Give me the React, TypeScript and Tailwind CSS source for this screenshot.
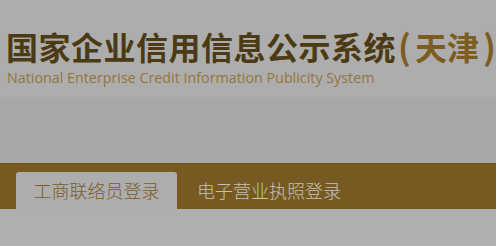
export default function App() {
  return (
    <div className="w-[496px] h-[246px] bg-[#afafaf] overflow-hidden" style={{ fontFamily: '"Noto Sans CJK SC", sans-serif' }}>
      <div className="h-[97px] bg-[#adadad] pl-[6px] pt-[26px]">
        <div className="flex items-center h-[40px] text-[32px] leading-none font-bold whitespace-nowrap">
          <span className="text-[#4b3a13] tracking-[0.5px]">国家企业信用信息公示系统</span>
          <span className="text-[#7d5c22] ml-[2px] text-[34px] font-semibold">(</span>
          <span className="text-[#7d5c22] mx-[4px]">天津</span>
          <span className="text-[#7d5c22] text-[34px] font-semibold">)</span>
        </div>
        <div className="mt-[3px] pl-[1px] text-[14.3px] leading-[18px] text-[#93753c] whitespace-nowrap" style={{ fontFamily: '"Open Sans", sans-serif' }}>
          National Enterprise Credit Information Publicity System
        </div>
      </div>
      <div className="h-[66px] bg-[#a8a8a8]" />
      <div className="h-[46px] bg-[#775a22] border-t border-[#6f5422] flex items-end pl-[16px]">
        <div className="h-[37px] w-[161px] bg-[#adadad] rounded-t-[3px] flex items-center justify-center text-[18px] font-light text-[#7a5c27]">
          工商联络员登录
        </div>
        <div className="h-[37px] pl-[20px] flex items-center text-[18px] font-light text-[#c4c0b8]">
          电子营业执照登录
        </div>
      </div>
      <div className="bg-[#afafaf] h-[37px]" />
    </div>
  );
}
